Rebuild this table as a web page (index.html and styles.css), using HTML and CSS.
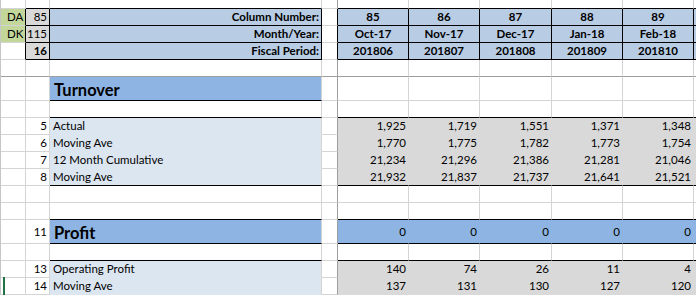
FILE: index.html
```html
<!DOCTYPE html>
<html>
<head>
<meta charset="utf-8">
<link rel="stylesheet" href="styles.css">
</head>
<body>
<div class="sheet">
  <div class="row top">
    <div></div><div class="kb"></div><div class="kb"></div><div class="d"></div>
    <div class="kb"></div><div class="kb"></div><div class="kb"></div><div class="kb"></div><div class="kb"></div><div class="kb"></div>
  </div>
  <div class="row">
    <div class="green kr code">DA</div>
    <div class="grey k num">85</div>
    <div class="blue k num bold">Column Number:</div>
    <div class="d kr"></div>
    <div class="blue k ctr bold">85</div><div class="blue k ctr bold">86</div><div class="blue k ctr bold">87</div><div class="blue k ctr bold">88</div><div class="blue k ctr bold">89</div><div class="blue k ctr bold"></div>
  </div>
  <div class="row">
    <div class="green kr code">DK</div>
    <div class="grey k num">115</div>
    <div class="blue k num bold">Month/Year:</div>
    <div class="d kr"></div>
    <div class="blue k ctr bold">Oct-17</div><div class="blue k ctr bold">Nov-17</div><div class="blue k ctr bold">Dec-17</div><div class="blue k ctr bold">Jan-18</div><div class="blue k ctr bold">Feb-18</div><div class="blue k ctr bold"></div>
  </div>
  <div class="row">
    <div class="kr"></div>
    <div class="grey k num bold">16</div>
    <div class="blue k num bold">Fiscal Period:</div>
    <div class="d kr"></div>
    <div class="blue k ctr bold">201806</div><div class="blue k ctr bold">201807</div><div class="blue k ctr bold">201808</div><div class="blue k ctr bold">201809</div><div class="blue k ctr bold">201810</div><div class="blue k ctr bold"></div>
  </div>
  <div class="row frz">
    <div></div><div></div><div></div><div class="d"></div><div></div><div></div><div></div><div></div><div></div><div></div>
  </div>
  <div class="row big">
    <div></div><div></div>
    <div class="dblue kb title">Turnover</div>
    <div class="d"></div><div></div><div></div><div></div><div></div><div></div><div></div>
  </div>
  <div class="row">
    <div></div><div></div><div class="kb"></div><div class="d"></div>
    <div class="kb"></div><div class="kb"></div><div class="kb"></div><div class="kb"></div><div class="kb"></div><div class="kb"></div>
  </div>
  <div class="row">
    <div></div><div class="num">5</div><div class="lblue lbl">Actual</div><div class="d"></div>
    <div class="grey fg num">1,925</div><div class="grey fg num">1,719</div><div class="grey fg num">1,551</div><div class="grey fg num">1,371</div><div class="grey fg num">1,348</div><div class="grey fg num"></div>
  </div>
  <div class="row">
    <div></div><div class="num">6</div><div class="lblue lbl">Moving Ave</div><div class="d"></div>
    <div class="grey fg num">1,770</div><div class="grey fg num">1,775</div><div class="grey fg num">1,782</div><div class="grey fg num">1,773</div><div class="grey fg num">1,754</div><div class="grey fg num"></div>
  </div>
  <div class="row">
    <div></div><div class="num">7</div><div class="lblue lbl">12 Month Cumulative</div><div class="d"></div>
    <div class="grey fg num">21,234</div><div class="grey fg num">21,296</div><div class="grey fg num">21,386</div><div class="grey fg num">21,281</div><div class="grey fg num">21,046</div><div class="grey fg num"></div>
  </div>
  <div class="row">
    <div></div><div class="num">8</div><div class="lblue lbl kb">Moving Ave</div><div class="d"></div>
    <div class="grey fg kb num">21,932</div><div class="grey fg kb num">21,837</div><div class="grey fg kb num">21,737</div><div class="grey fg kb num">21,641</div><div class="grey fg kb num">21,521</div><div class="grey fg kb num"></div>
  </div>
  <div class="row">
    <div></div><div></div><div></div><div class="d"></div><div></div><div></div><div></div><div></div><div></div><div></div>
  </div>
  <div class="row">
    <div></div><div></div><div class="kb"></div><div class="d"></div>
    <div class="kb"></div><div class="kb"></div><div class="kb"></div><div class="kb"></div><div class="kb"></div><div class="kb"></div>
  </div>
  <div class="row big">
    <div></div><div class="num">11</div>
    <div class="dblue kb title">Profit</div>
    <div class="d"></div>
    <div class="dblue fb kb num">0</div><div class="dblue fb kb num">0</div><div class="dblue fb kb num">0</div><div class="dblue fb kb num">0</div><div class="dblue fb kb num">0</div><div class="dblue fb kb num"></div>
  </div>
  <div class="row">
    <div></div><div></div><div class="kb"></div><div class="d"></div>
    <div class="kb"></div><div class="kb"></div><div class="kb"></div><div class="kb"></div><div class="kb"></div><div class="kb"></div>
  </div>
  <div class="row">
    <div></div><div class="num">13</div><div class="lblue lbl">Operating Profit</div><div class="d"></div>
    <div class="grey fg num">140</div><div class="grey fg num">74</div><div class="grey fg num">26</div><div class="grey fg num">11</div><div class="grey fg num">4</div><div class="grey fg num"></div>
  </div>
  <div class="row">
    <div></div><div class="num">14</div><div class="lblue lbl">Moving Ave</div><div class="d"></div>
    <div class="grey fg num">137</div><div class="grey fg num">131</div><div class="grey fg num">130</div><div class="grey fg num">127</div><div class="grey fg num">120</div><div class="grey fg num"></div>
  </div>
  <div class="row">
    <div></div><div></div><div class="lblue lbl"></div><div class="d"></div>
    <div class="grey fg"></div><div class="grey fg"></div><div class="grey fg"></div><div class="grey fg"></div><div class="grey fg"></div><div class="grey fg"></div>
  </div>
</div>
<div class="sel"></div>
</body>
</html>
```
FILE: styles.css
```css
html, body {
  margin: 0;
  padding: 0;
  background: #ffffff;
}
body {
  position: relative;
  width: 696px;
  height: 295px;
  overflow: hidden;
  font-family: Lato, "Liberation Sans", sans-serif;
  font-size: 11.5px;
  color: #000000;
}
.sheet {
  display: flex;
  flex-direction: column;
  width: max-content;
  border-left: 1px solid #c6c6c6;
}
.row {
  display: grid;
  grid-template-columns: 25px 24px 272px 16px 71px 71px 72px 71px 71px 71px;
  height: 17px;
}
.row.top { height: 9px; }
.row.big { height: 24px; }
.row > div {
  box-sizing: border-box;
  border-right: 1px solid #d4d4d4;
  border-bottom: 1px solid #d4d4d4;
  display: flex;
  align-items: center;
  white-space: nowrap;
  overflow: hidden;
  line-height: 16px;
}
.row > .d { border-right-color: #9e9e9e; }
.row.frz > div { border-bottom-color: #9e9e9e; }

.green { background: #c4d79b; }
.grey { background: #d9d9d9; }
.blue { background: #b8cce4; }
.dblue { background: #8db4e2; }
.lblue { background: #dce6f1; }

.row > .fg { border-right-color: #d9d9d9; border-bottom-color: #d9d9d9; }
.row > .fb { border-right-color: #8db4e2; }
.row > .lblue { border-bottom-color: #dce6f1; }

.row > .k { border-right-color: #000; border-bottom-color: #000; }
.row > .kb { border-bottom-color: #000; }
.row > .kr { border-right-color: #000; }

.num { justify-content: flex-end; padding-right: 2px; }
.ctr { justify-content: center; }
.code { padding-left: 6px; }
.lbl { padding-left: 3px; }
.bold { font-weight: 700; }
.title {
  font-weight: 700;
  font-size: 16.5px;
  padding-left: 4px;
  padding-top: 2px;
}
.sel {
  position: absolute;
  left: 3px;
  top: 277px;
  width: 2px;
  height: 18px;
  background: #217346;
}
```
